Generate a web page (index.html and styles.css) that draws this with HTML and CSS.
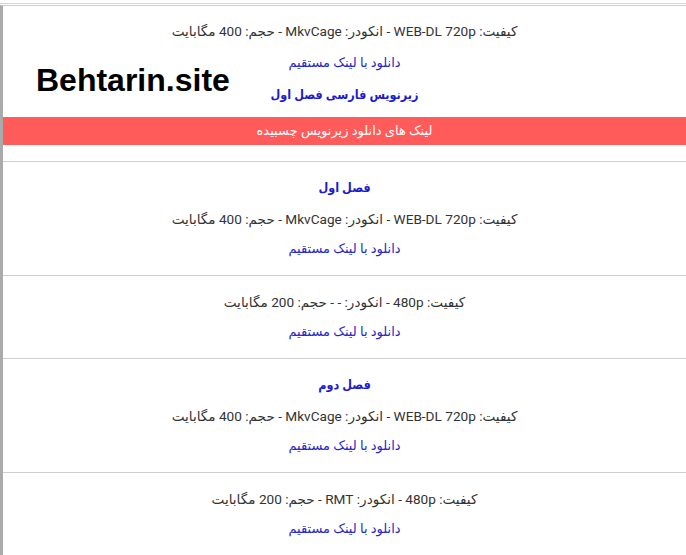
FILE: index.html
```html
<!DOCTYPE html>
<html lang="fa">
<head>
<meta charset="utf-8">
<title>دانلود</title>
<link rel="stylesheet" href="styles.css">
</head>
<body>
<div class="page">
  <div class="box" dir="rtl">
    <div class="row top">
      <p class="quality">کیفیت: WEB-DL 720p - انکودر: MkvCage - حجم: 400 مگابایت</p>
      <p class="dl"><a href="#">دانلود با لینک مستقیم</a></p>
      <p class="title">زیرنویس فارسی فصل اول</p>
    </div>
    <div class="banner">لینک های دانلود زیرنویس چسبیده</div>
    <div class="spacer"></div>
    <div class="row">
      <p class="title">فصل اول</p>
      <p class="quality">کیفیت: WEB-DL 720p - انکودر: MkvCage - حجم: 400 مگابایت</p>
      <p class="dl"><a href="#">دانلود با لینک مستقیم</a></p>
    </div>
    <div class="row">
      <p class="quality">کیفیت: 480p - انکودر: - - حجم: 200 مگابایت</p>
      <p class="dl"><a href="#">دانلود با لینک مستقیم</a></p>
    </div>
    <div class="row">
      <p class="title">فصل دوم</p>
      <p class="quality">کیفیت: WEB-DL 720p - انکودر: MkvCage - حجم: 400 مگابایت</p>
      <p class="dl"><a href="#">دانلود با لینک مستقیم</a></p>
    </div>
    <div class="row">
      <p class="quality">کیفیت: 480p - انکودر: RMT - حجم: 200 مگابایت</p>
      <p class="dl"><a href="#">دانلود با لینک مستقیم</a></p>
    </div>
  </div>
  <div class="watermark">Behtarin.site</div>
</div>
</body>
</html>
```
FILE: styles.css
```css
html, body {
  margin: 0;
  padding: 0;
  background: #fff;
}
body {
  font-family: Roboto, "DejaVu Sans", sans-serif;
  font-size: 13px;
  color: #333;
}
.page {
  position: relative;
  margin-top: 3px;
  border-top: 1px solid #d4d4d4;
  padding-top: 1px;
}
.box {
  border-left: 3px solid #aaa;
  border-top: 1px solid #cfcfcf;
  min-height: 560px;
}
.row {
  padding: 11px 0 11px;
  border-bottom: 1px solid #cfcfcf;
  text-align: center;
}
.row.top {
  border-bottom: none;
  padding: 10px 0 7px;
}
.row p {
  margin: 0;
  line-height: 30px;
}
.quality {
  font-size: 13.6px;
}
.row.top .dl,
.row.top .title {
  margin-top: 2px;
}
.row .title {
  margin-bottom: 1px;
}
.row.top .title {
  margin-bottom: 0;
}
.dl a {
  color: #2727c9;
  text-decoration: none;
}
.title {
  color: #1b1bd0;
  font-weight: bold;
  font-family: Roboto, "DejaVu Sans Condensed", "DejaVu Sans", sans-serif;
  font-size: 12.5px;
}
.banner {
  background: #ff5b5b;
  color: #fff;
  text-align: center;
  height: 28px;
  line-height: 28px;
  font-size: 13px;
}
.spacer {
  height: 16px;
  border-bottom: 1px solid #cfcfcf;
}
.watermark {
  position: absolute;
  left: 36px;
  top: 58px;
  font-family: "Liberation Sans", Arial, sans-serif;
  font-weight: bold;
  font-size: 32px;
  color: #000;
  line-height: 36px;
}
```
